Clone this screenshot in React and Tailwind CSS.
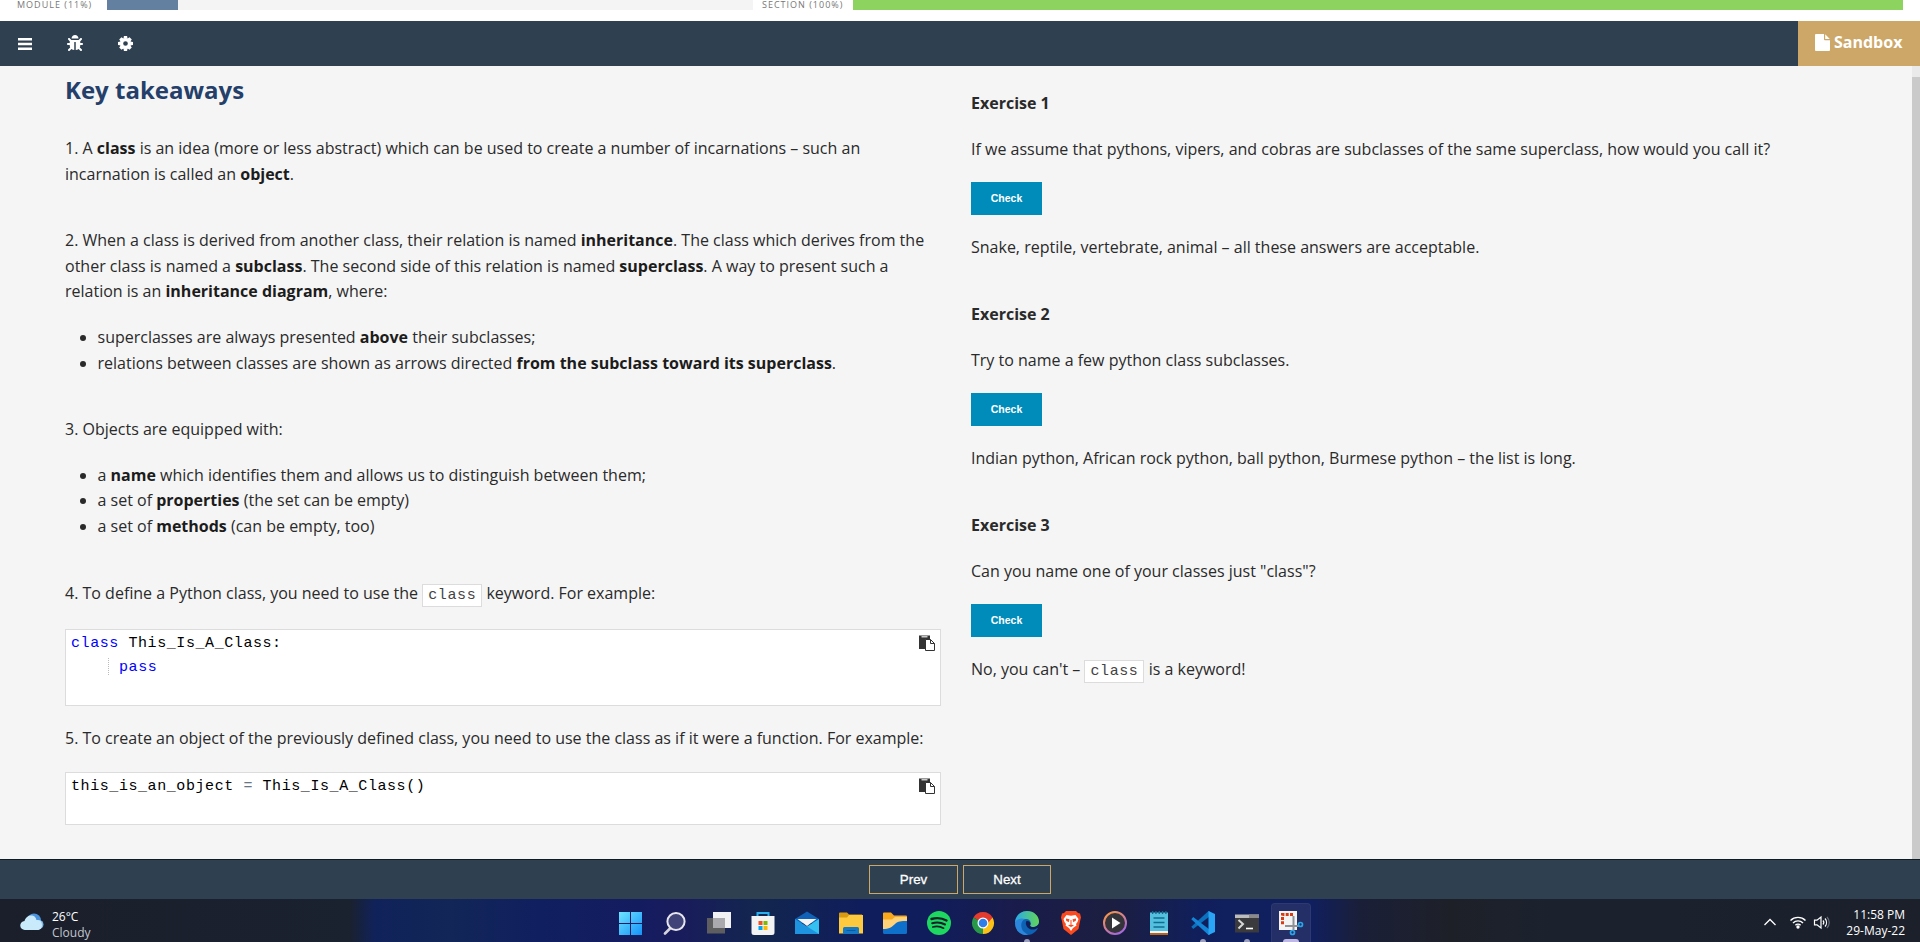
import { FaBug } from "react-icons/fa";

const Code = ({ children }) => (
  <code className="inline-block h-[23px] border border-[#dcdcdc] bg-white px-[5px] align-baseline font-['Liberation_Mono',monospace] text-[15px] leading-[22px] tracking-[0.600px] text-[#444]">
    {children}
  </code>
);

const PasteIcon = () => (
  <svg className="mt-[5px] size-4" viewBox="0 0 16 16">
    <path fill="#333" d="M0 .5h11V5H6v9H0z" />
    <path fill="#c9c9c9" d="M2.500 1h6v1.500h-6z" />
    <path fill="#fff" stroke="#333" d="M6.500 4.500h5l4 4v7h-9z" />
    <path fill="none" stroke="#333" d="M11.500 4.500v4h4" />
  </svg>
);

const CodeBox = ({ className, children }) => (
  <div className={"flex w-[876px] justify-between border border-[#dcdcdc] bg-white pl-[5px] pr-[5px] " + className}>
    <pre className="pt-[2px] font-['Liberation_Mono',monospace] text-[15px] leading-[24px] tracking-[0.575px] text-black">{children}</pre>
    <PasteIcon />
  </div>
);

const Exercise = ({ n, question, className, children }) => (
  <section className={className}>
    <h3 className="font-bold">Exercise {n}</h3>
    <p className="mt-5">{question}</p>
    <button className="mt-5 block h-[33px] w-[71px] bg-[#008cba] font-['Liberation_Sans',sans-serif] text-[10.500px] font-bold leading-[33px] text-white">
      Check
    </button>
    <p className="mt-5">{children}</p>
  </section>
);

const icons = [
  <svg viewBox="0 0 24 24" key="win">
    <defs><linearGradient id="w" x1="0" y1="0" x2="1" y2="1" gradientUnits="objectBoundingBox"><stop stopColor="#6fe4ff" /><stop offset="1" stopColor="#1492f8" /></linearGradient></defs>
    <path fill="url(#w)" d="M0 1h11v11H0zM12 1h11v11H12zM0 13h11v11H0zM12 13h11v11H12z" />
  </svg>,
  <svg viewBox="0 0 24 24" key="search">
    <path d="M7.500 17 2 22.500" stroke="#d4d4dc" strokeWidth="2.600" strokeLinecap="round" />
    <circle cx="13" cy="10.500" r="8.600" fill="#3f4378" stroke="#e6e6ec" strokeWidth="2" />
  </svg>,
  <svg viewBox="0 0 24 24" key="task">
    <path fill="#f1f1f4" d="M6 1h18v16H6z" />
    <path fill="#5e5e60" d="M0 7h18v15.500H0z" />
    <path fill="#a9a9ae" d="M6 7h12v10H6z" />
  </svg>,
  <svg viewBox="0 0 24 24" key="store">
    <path d="M6.500 6V2h11v4" fill="none" stroke="#2ab0ee" strokeWidth="2" />
    <path fill="#f3f3f3" d="M.5 5h23v16.500A2.500 2.500 0 0 1 21 24H3a2.500 2.500 0 0 1-2.500-2.500z" />
    <path fill="#f25022" d="M7.500 10h4v4h-4z" /><path fill="#7fba00" d="M12.500 10h4v4h-4z" />
    <path fill="#00a4ef" d="M7.500 15h4v4h-4z" /><path fill="#ffb900" d="M12.500 15h4v4h-4z" />
  </svg>,
  <svg viewBox="0 0 24 24" key="mail">
    <path fill="#0f62b5" d="M12 .5 24 8v4H0V8z" /><path fill="#35c0f2" d="M24 8v15H0z" /><path fill="#1e93e0" d="M0 8l24 15H0z" />
    <path fill="#f4f4f6" d="M2.500 8h19L12 15z" />
  </svg>,
  <svg viewBox="0 0 24 24" key="folder">
    <path fill="#d79a10" d="M0 2.500a1 1 0 0 1 1-1h7l2 2h13v6H0z" /><path fill="#fdc93e" d="M0 6.500h8L10 4h14v18.500H0z" />
    <path fill="#1579c8" d="M4 23v-5.500A1.500 1.500 0 0 1 5.500 16h13a1.500 1.500 0 0 1 1.500 1.500V23z" /><path stroke="#0b5aa0" d="M7.500 19.500h9" />
  </svg>,
  <svg viewBox="0 0 24 24" key="folder2">
    <path fill="#f9a81c" d="M0 2.500a1 1 0 0 1 1-1h7l3 3h12a1 1 0 0 1 1 1v9H0z" /><path fill="#ffd27a" d="M0 8.500h9l3-2.500h12v14H0z" />
    <path fill="#0f70cc" d="M0 18c6 0 9-2 12-5s6-3 12-3v11.500a1.500 1.500 0 0 1-1.500 1.500h-21A1.500 1.500 0 0 1 0 21.500z" />
  </svg>,
  <svg viewBox="0 0 24 24" key="spotify">
    <circle cx="12" cy="12" r="12" fill="#1ed760" />
    <g fill="none" stroke="#10202a" strokeLinecap="round"><path strokeWidth="2.400" d="M4.500 8c5-1.500 10.500-1 15 1.500" /><path strokeWidth="2" d="M5.200 12.200c4.500-1.300 9-.8 12.800 1.300" /><path strokeWidth="1.700" d="M5.800 16c4-1 7.500-.6 10.800 1.200" /></g>
  </svg>,
  <svg viewBox="0 0 24 24" key="chrome">
    <path fill="#e33b2e" d="M12 12 2.470 6.500a11 11 0 0 1 19.060 0z" /><path fill="#fbc116" d="M12 12 21.530 6.500A11 11 0 0 1 12 23z" />
    <path fill="#279847" d="M12 12v11A11 11 0 0 1 2.470 6.500z" /><path fill="#e33b2e" d="M12 6.500h9.530L17 12z" /><path fill="#279847" d="m7.200 14.700 4.800 2.800L12 23z" /><path fill="#fbc116" d="m12 23 4.800-8.300L12 17z" />
    <circle cx="12" cy="12" r="5.500" fill="#fff" /><circle cx="12" cy="12" r="4.300" fill="#2f7de9" />
  </svg>,
  <svg viewBox="0 0 24 24" key="edge">
    <defs><linearGradient id="e" x1="0" y1="0" x2="1" y2="0"><stop stopColor="#2aa9e8" /><stop offset="1" stopColor="#62d657" /></linearGradient></defs>
    <circle cx="12" cy="12" r="12" fill="#0e62b4" />
    <path fill="url(#e)" d="M0 11.500C.5 5 5.500 0 12 0c7 0 12 5 12 10.500 0 3.500-3 5.500-6 5.500-2.500 0-3.500-1-3-2 1.500-2 .5-6-4-6C5.500 8 1 9.500 0 12z" />
    <path fill="#2b86dc" d="M0 12c1-4 6-5.500 10-4-4 2-5 7-2 12l5 4C5 24.500 0 19 0 12z" />
    <path fill="#111d59" d="M11.500 10c-2 3 1 8.500 6 8.500 2.500 0 4-.6 5-1.500l2 1V10c0 4-3 6-6 6-2.500 0-4-1-3-2.500.5-1.500-1-4-4-3.500z" />
  </svg>,
  <svg viewBox="0 0 24 24" key="brave">
    <path fill="#fb4a1e" d="M7 0h10l2 2 2 .5 1 4-.8 3L19.500 18 12 24 4.500 18 2.800 9.500 2 6.500l1-4L5 2z" />
    <path fill="#fff" d="m7.500 4 4.500.8 4.500-.8L19.500 8l-1 3-1.500 2 .5 1.500L14 17l-2 3-2-3-3.500-2.500L7 13l-1.500-2-1-3z" />
    <path fill="#fb4a1e" d="m7 7.500 3.500.8-.8 3L7 9.500zM17 7.500l-3.500.8.8 3L17 9.500zM9 14.500l3-1.200 3 1.200-3 1.500zM11.500 9h1v4h-1z" />
  </svg>,
  <svg viewBox="0 0 24 24" key="media">
    <defs><linearGradient id="m" x1="0" y1="0" x2=".6" y2="1"><stop stopColor="#ff9a3c" /><stop offset="1" stopColor="#a76ad8" /></linearGradient></defs>
    <circle cx="12" cy="12" r="11" fill="#34343a" stroke="url(#m)" strokeWidth="2" /><path fill="#fff" d="M9 6.500v11l8.500-5.500z" />
  </svg>,
  <svg viewBox="0 0 24 24" key="notes">
    <path fill="#54bfdf" d="M3 1.500h18V21H3z" /><path fill="#f2f2f2" d="M3 20h18v2H3z" /><path fill="#b8641c" d="M3 22h18v2H3z" />
    <path stroke="#106a8c" strokeWidth="3" strokeDasharray="1.300 2" d="M5 1.500h15" /><path stroke="#0f6d92" strokeWidth="1.500" d="M6.500 7h11M6.500 11.500h11M6.500 16h11" />
  </svg>,
  <svg viewBox="0 0 24 24" key="code">
    <path fill="#0b70bd" d="M.3 15.800 2.200 18 18.500 5.500V0h-1z" />
    <path fill="#1485d6" d="M.3 8.200 2.200 6l16.300 12.500V24h-1z" /><path fill="#2aa4f4" d="M17.500 0 24 3v18l-6.500 3z" />
  </svg>,
  <svg viewBox="0 0 24 24" key="term">
    <path fill="#bcbcbc" d="M0 3.500h24V8H0z" /><path fill="#8a8a8a" d="M14 3.500h10V7H14z" /><path fill="#3b3b3d" d="M0 7h24v14.500H0z" />
    <path fill="none" stroke="#d8d8d8" strokeWidth="2" d="m3.500 9 4.500 4-4.500 4.500" /><path stroke="#fff" strokeWidth="1.600" d="M11 17.500h7" />
  </svg>,
  <svg viewBox="0 0 24 24" key="snip">
    <path fill="#f4f4f4" d="M0 0h18v19H0z" /><path fill="none" stroke="#d83b12" strokeWidth="3" strokeDasharray="3 1.300" d="M14 3.500H3.500V14" />
    <path fill="none" stroke="#8e9298" strokeWidth="2" d="M14.500 5v14M6 15h14" />
    <g fill="none" stroke="#2ba5e8" strokeWidth="1.700"><circle cx="21.500" cy="13.500" r="2" /><circle cx="13.500" cy="21.500" r="2" /></g>
  </svg>,
];

const running = [9, 13, 14];

export default function App() {
  return (
    <div className="flex h-[942px] w-[1920px] flex-col overflow-hidden bg-[#f5f5f5] font-['Open_Sans',sans-serif] text-[16px] leading-[25.600px] text-[#2a2a2a] [&_b]:text-[#1c1c1c]">
      <div className="flex h-[21px] items-start bg-white text-[9px] leading-[9px] tracking-[1px] text-[#777]">
        <span className="w-[107px] whitespace-nowrap pl-[17px]">MODULE (11%)</span>
        <div className="h-[10px] w-[646px] bg-[#f4f4f4]"><div className="h-full w-[71px] bg-[#6380a0]" /></div>
        <span className="w-[100px] whitespace-nowrap pl-[9px]">SECTION (100%)</span>
        <div className="h-[10px] w-[1050px] bg-[#8cd45f]" />
      </div>

      <nav className="flex h-[45px] items-center bg-[#2f4050] text-white">
        <svg className="ml-[18px] h-[12px] w-[14px]" viewBox="0 0 14 12" fill="#fff"><path d="M0 0h14v2.600H0zM0 4.700h14v2.600H0zM0 9.400h14V12H0z" /></svg>
        <FaBug className="ml-[35px] size-4 -translate-y-px" />
        <svg className="ml-[35px] size-[15px]" viewBox="-8 -8 16 16">
          <g fill="#fff">
            <path d="M-1.700-8h3.400l.5 3h-4.400zM-1.700 8h3.400l.5-3h-4.400zM-8-1.700v3.400l3 .5v-4.400zM8-1.700v3.400l-3 .5v-4.400z" />
            <path transform="rotate(45)" d="M-1.700-7.800h3.400l.5 3h-4.400zM-1.700 7.800h3.400l.5-3h-4.400zM-7.800-1.700v3.400l3 .5v-4.400zM7.800-1.700v3.400l-3 .5v-4.400z" />
          </g>
          <circle r="4.200" fill="none" stroke="#fff" strokeWidth="3.400" />
        </svg>
        <div className="ml-auto flex h-full w-[122px] items-center bg-[#cca767] pb-[2px] pl-[17px] font-bold">
          <svg className="mr-[4px] h-[17px] w-[15px]" viewBox="0 0 15 17" fill="#fff">
            <path d="M1 0h8v5.300a.9.900 0 0 0 .9.900H15V16a1 1 0 0 1-1 1H1a1 1 0 0 1-1-1V1a1 1 0 0 1 1-1z" /><path d="M10.200.2 14.800 5h-4.600z" />
          </svg>
          Sandbox
        </div>
      </nav>

      <main className="flex h-[793px]">
        <article className="w-[971px] pl-[65px] pt-[8px]">
          <h1 className="text-[24px] font-bold leading-[32px] text-[#24406a]">Key takeaways</h1>
          <p className="mt-[30px]">
            1. A <b>class</b> is an idea (more or less abstract) which can be used to create a number of incarnations – such an<br />
            incarnation is called an <b>object</b>.
          </p>
          <p className="mt-[41px]">
            2. When a class is derived from another class, their relation is named <b>inheritance</b>. The class which derives from the<br />
            other class is named a <b>subclass</b>. The second side of this relation is named <b>superclass</b>. A way to present such a<br />
            relation is an <b>inheritance diagram</b>, where:
          </p>
          <ul className="mt-[20px] list-disc pl-[32.500px]">
            <li>superclasses are always presented <b>above</b> their subclasses;</li>
            <li>relations between classes are shown as arrows directed <b>from the subclass toward its superclass</b>.</li>
          </ul>
          <p className="mt-[41px]">3. Objects are equipped with:</p>
          <ul className="mt-[20px] list-disc pl-[32.500px]">
            <li>a <b>name</b> which identifies them and allows us to distinguish between them;</li>
            <li>a set of <b>properties</b> (the set can be empty)</li>
            <li>a set of <b>methods</b> (can be empty, too)</li>
          </ul>
          <p className="mt-[41px]">4. To define a Python class, you need to use the <Code>class</Code> keyword. For example:</p>
          <CodeBox className="mt-[22px] h-[77px]">
            <span className="text-[#0000ff]">class</span>{" This_Is_A_Class:\n"}
            <span className="ml-[37px] inline-block h-[17px] border-l border-dotted border-[#bbb] align-middle" />
            <span className="pl-[10px] text-[#0000ff]">pass</span>
          </CodeBox>
          <p className="mt-[20px]">5. To create an object of the previously defined class, you need to use the class as if it were a function. For example:</p>
          <CodeBox className="mt-[21px] h-[53px]">
            this_is_an_object <span className="text-[#687687]">=</span> This_Is_A_Class()
          </CodeBox>
        </article>

        <aside className="w-[941px] pt-[25px]">
          <Exercise n={1} question="If we assume that pythons, vipers, and cobras are subclasses of the same superclass, how would you call it?">
            Snake, reptile, vertebrate, animal – all these answers are acceptable.
          </Exercise>
          <Exercise n={2} className="mt-[41.200px]" question="Try to name a few python class subclasses.">
            Indian python, African rock python, ball python, Burmese python – the list is long.
          </Exercise>
          <Exercise n={3} className="mt-[41.200px]" question={'Can you name one of your classes just "class"?'}>
            No, you can't – <Code>class</Code> is a keyword!
          </Exercise>
        </aside>
        <div className="w-[8px] bg-[#eaeaea] pt-[11px]"><div className="h-full bg-[#cacaca]" /></div>
      </main>

      <footer className="flex h-[40px] justify-center gap-[5px] border-t border-[#111a22] bg-[#2f4050] pt-[5px] font-['Liberation_Sans',sans-serif] text-[13.300px] leading-[27px] text-white [-webkit-text-stroke:0.3px_white]">
        <button className="h-[29px] w-[89px] border border-[#cca767]">Prev</button>
        <button className="h-[29px] w-[88px] border border-[#cca767]">Next</button>
      </footer>

      <div className="flex h-[43px] bg-[linear-gradient(90deg,#1b1f2b_0px,#1a212f_350px,#10225a_375px,#122657_450px,#101f60_540px,#141c60_640px,#191c5c_680px,#12264e_760px,#101d5c_860px,#101d5c_930px,#191c4c_1010px,#1c1e40_1110px,#101f5c_1200px,#101f60_1310px,#1a1f38_1360px,#1e2028_1450px,#1b222e_1550px,#1b202b_1920px)] text-[12px] leading-[16px] text-white">
        <div className="flex w-[609px] gap-[8px] pl-[20px] pt-[10px]">
          <svg className="mt-[4px] h-[18px] w-[24px]" viewBox="0 0 24 18">
            <circle cx="14" cy="7.500" r="7" fill="#4b93dc" /><circle cx="19" cy="11.500" r="4.500" fill="#82bdec" />
            <path fill="#c9eafb" d="M5 17a4.500 4.500 0 0 1-.5-9C5.500 4 9 2 12 2.500c3.500.6 4 3 4.500 4.500 3-.5 5.500 1.500 5.500 5 0 3-2 5-4.500 5z" />
          </svg>
          <div><div>26°C</div><div className="text-[#c3c6cc]">Cloudy</div></div>
        </div>
        {icons.map((icon, i) => (
          <div key={i} className={"flex h-full w-[44px] flex-col items-center " + (i === 15 ? "pt-[4px]" : "pt-[12px]")}>
            {i === 15 ? (
              <div className="flex h-[39px] w-[40px] flex-col items-center rounded-t-[4px] border border-b-0 border-[#2c3a70] bg-[#232f66] pt-[7px]">
                <div className="size-6 [&>svg]:overflow-visible">{icon}</div>
                <div className="mt-[4px] h-[3px] w-[16px] rounded-t-full bg-[#c0b8e4]" />
              </div>
            ) : (
              <div className="size-6">{icon}</div>
            )}
            {running.includes(i) && <div className="mt-[4px] h-[3px] w-[6px] rounded-t-full bg-[#9a9ebb]" />}
          </div>
        ))}
        <div className="ml-auto flex pr-[15px]">
          <svg className="mt-[18px] h-[10px] w-[14px]" viewBox="0 0 14 10" fill="none" stroke="#fff" strokeWidth="1.300"><path d="m1.500 8 5.500-5.500L12.500 8" /></svg>
          <svg className="ml-[12px] mt-[16px] h-[14px] w-[18px]" viewBox="0 0 18 14" fill="none" stroke="#fff" strokeWidth="1.400">
            <path d="M1.500 5.500a10.600 10.600 0 0 1 15 0M4 8a7 7 0 0 1 10 0M6.400 10.300a3.700 3.700 0 0 1 5.200 0" /><circle cx="9" cy="12" r="1" fill="#fff" />
          </svg>
          <svg className="ml-[6px] mt-[16px] h-[15px] w-[18px]" viewBox="0 0 18 15" fill="none" stroke="#fff" strokeWidth="1.200">
            <path d="M1.500 5.200h2.500L8 2v11L4 9.800H1.500z" /><path d="M10 5.500c1 1.200 1 2.800 0 4M12 3.500c2 2.300 2 5.700 0 8" /><path stroke="#666b78" d="M14 2c3 3.200 3 7.800 0 11" />
          </svg>
          <div className="ml-[10px] w-[64px] whitespace-nowrap pt-[8px] text-right"><div>11:58 PM</div><div>29-May-22</div></div>
        </div>
      </div>
    </div>
  );
}
